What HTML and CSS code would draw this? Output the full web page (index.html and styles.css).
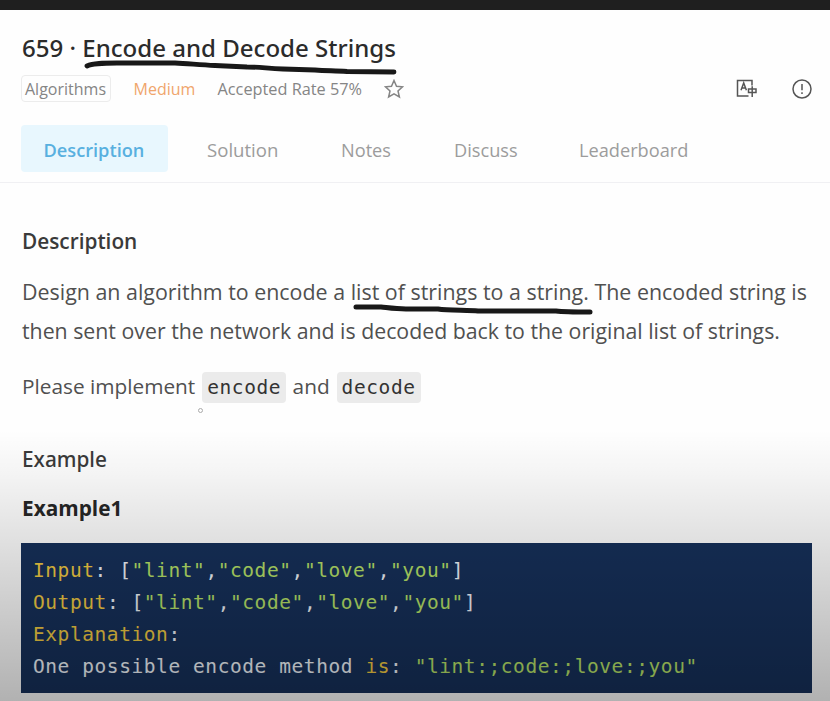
FILE: index.html
```
<!DOCTYPE html>
<html lang="en">
<head>
<meta charset="utf-8">
<title>659 · Encode and Decode Strings</title>
<link rel="stylesheet" href="styles.css">
</head>
<body>
<div class="topbar"></div>
<header class="header">
  <h1 class="title">659 · <span class="marked">Encode and Decode Strings<svg class="stroke stroke-title" width="314" height="18" viewBox="0 0 314 18"><path d="M4 7 C10 4 20 4 34 4 L92 4 C106 4.500 116 6 132 6.500 L164 8 C178 8 184 9.500 200 10 L232 11 C244 12 252 11.500 264 12.500 L311 13"/></svg></span></h1>
  <div class="meta">
    <span class="tag">Algorithms</span>
    <span class="level">Medium</span>
    <span class="rate">Accepted Rate 57%</span>
    <svg class="star" width="20" height="20" viewBox="0 0 20 20"><path d="M10 1.500 L12.500 7.200 L18.500 7.800 L14 11.900 L15.400 18 L10 14.900 L4.600 18 L6 11.900 L1.500 7.800 L7.500 7.200 Z"/></svg>
    <div class="tools">
      <svg width="22" height="20" viewBox="0 0 22 20"><path d="M17 7.500 V2.500 H2.500 V18 H13.500" /><path d="M6 12.300 L8.700 5 L11.400 12.300 M7 10 H10.500"/><path d="M13.500 11 H21 V14.500 H13.500 Z M17.200 8.300 V19"/></svg>
      <svg width="22" height="22" viewBox="0 0 22 22"><circle cx="11" cy="11" r="9"/><path d="M11 6 V12.300 M11 14.300 V16"/></svg>
    </div>
  </div>
</header>
<nav class="tabs">
  <a class="tab active">Description</a>
  <a class="tab solution">Solution</a>
  <a class="tab notes">Notes</a>
  <a class="tab discuss">Discuss</a>
  <a class="tab board">Leaderboard</a>
</nav>
<main class="content">
  <h2 class="heading">Description</h2>
  <p class="text">Design an algorithm to encode a <span class="marked">list of strings to a string.<svg class="stroke stroke-text" width="242" height="14" viewBox="0 0 242 14"><path d="M4 4 L29 4 C38 5 44 6 54 6 L86 6 C96 7.500 116 7 126 8 L204 8 C212 9 226 9 238 9"/></svg></span> The encoded string is<br><span class="second">then sent over the network and is decoded back to the original list of strings.</span></p>
  <p class="text implement">Please implement <code>encode</code> and <code>decode</code><span class="cursor"></span></p>
  <h2 class="heading example">Example</h2>
  <h3 class="heading example-one">Example1</h3>
  <div class="code">
    <div><span class="key">Input</span>: [<span class="str">"lint"</span>,<span class="str">"code"</span>,<span class="str">"love"</span>,<span class="str">"you"</span>]</div>
    <div><span class="key">Output</span>: [<span class="str">"lint"</span>,<span class="str">"code"</span>,<span class="str">"love"</span>,<span class="str">"you"</span>]</div>
    <div><span class="key">Explanation</span>:</div>
    <div>One possible encode method <span class="key">is</span>: <span class="str">"lint:;code:;love:;you"</span></div>
  </div>
</main>
<div class="shade"></div>
</body>
</html>
```
FILE: styles.css
```
* { box-sizing: border-box; }
body {
  margin: 0;
  height: 701px;
  overflow: hidden;
  position: relative;
  background: #fefefe;
  color: #505050;
  font-family: "Open Sans", "Noto Sans", sans-serif;
}
.topbar { height: 10px; background: #1f1f1f; }
.header { padding: 18px 17px 0 21px; }
.title {
  margin: 0 0 0 1px;
  font: 500 24.05px/40px "Noto Sans", sans-serif;
  color: #2b2b2b;
  white-space: nowrap;
}
.marked { position: relative; }
.stroke {
  position: absolute;
  fill: none;
  stroke: #181818;
  stroke-linecap: round;
  stroke-linejoin: round;
}
.stroke-title { left: 1px; top: 28px; stroke-width: 4.8; }
.stroke-text { left: 1px; top: 26px; stroke-width: 5; }
.meta {
  display: flex;
  height: 27px;
  margin-top: 7px;
  font-size: 16px;
  line-height: 29px;
  color: #858585;
  white-space: nowrap;
}
.tag {
  width: 90px;
  height: 27px;
  border: 1px solid #ececec;
  border-radius: 4px;
  line-height: 27px;
  padding-left: 3px;
}
.level { width: 84px; padding-left: 22.5px; color: #f0a56c; }
.rate { width: 168px; padding-left: 22.5px; font-size: 16.3px; }
.star { margin: 4px 0 0 21px; fill: none; stroke: #858585; stroke-width: 1.5; }
.tools {
  display: flex;
  gap: 34px;
  margin: 3px 0 0 auto;
  fill: none;
  stroke: #555;
  stroke-width: 1.5;
}
.tabs {
  display: flex;
  height: 81px;
  padding: 23px 21px 0;
  border-bottom: 1px solid #f0f0f3;
  font-size: 18.2px;
  line-height: 50px;
  color: #9c9c9c;
}
.tab { height: 47px; white-space: nowrap; }
.tab.active {
  width: 147px;
  padding-left: 22.5px;
  border-radius: 4px;
  background: #e8f7fe;
  color: #58b0e0;
  font-weight: 600;
}
.solution { margin-left: 39px; width: 134px; font-size: 18.6px; }
.notes { width: 113px; }
.discuss { width: 125px; }
.content { padding: 43px 18px 0 22px; }
.heading {
  margin: 0;
  font: 600 20.8px/30px "Open Sans", sans-serif;
  color: #3a3a3a;
}
.text { margin: 16px 0 0; font-size: 21.42px; line-height: 39px; white-space: nowrap; }
.second { font-size: 21.3px; }
.text.implement { position: relative; margin-top: 17px; font-size: 20.8px; }
.text code {
  display: inline-block;
  height: 31px;
  padding: 0 5px;
  margin: 0 1px 0 1.5px;
  border-radius: 4px;
  background: #ebebeb;
  color: #333;
  font: 19.5px/32px "DejaVu Sans Mono", monospace;
  letter-spacing: .6px;
}
.cursor {
  position: absolute;
  left: 176px;
  top: 41px;
  width: 5px;
  height: 5px;
  border: 1px solid #aaa;
  border-radius: 50%;
}
.heading.example { margin-top: 38px; font: 500 20.8px/30px "Noto Sans", sans-serif; }
.heading.example-one { margin-top: 19px; font-weight: 700; color: #262626; }
.code {
  margin: 20px 0 0 -1px;
  height: 150px;
  padding: 12px 12px;
  background: #16305a;
  color: #f0f5fa;
  font: 19.5px/32px "DejaVu Sans Mono", monospace;
  letter-spacing: .57px;
  white-space: nowrap;
}
.key { color: #f2cb42; }
.str { color: #b8e268; }
.shade {
  position: absolute;
  inset: 430px 0 0;
  background: linear-gradient(rgba(0,0,0,0), rgba(0,0,0,.04) 16%, rgba(0,0,0,.12) 42%, rgba(0,0,0,.3));
  pointer-events: none;
}
```
